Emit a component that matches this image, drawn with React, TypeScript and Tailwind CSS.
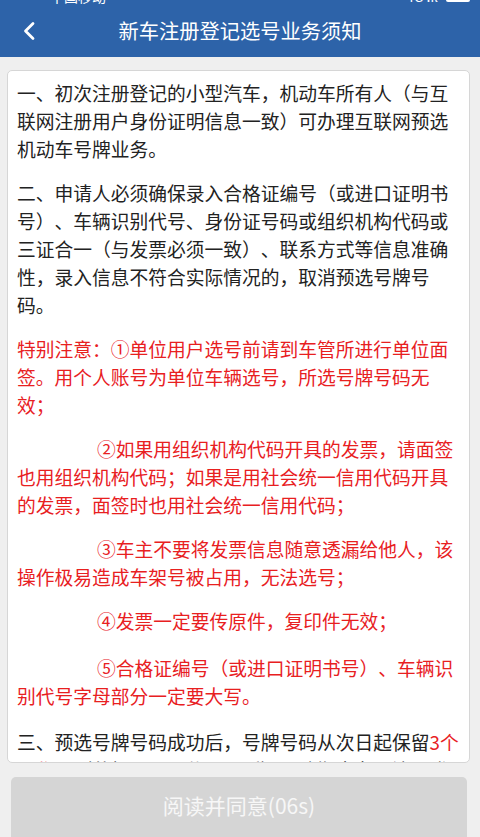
const cjk = "font-['Noto_Sans_CJK_SC','Noto_Sans',sans-serif]";

const Notice = () => {
  return (
    <div
      className={`mt-[13px] ml-[7px] mr-[10px] flex-1 min-h-0 overflow-hidden rounded-[5px] border border-[#d6d6d6] bg-white pl-[9px] pr-[8px] pt-[8px] text-[18.75px] leading-[28px] text-[#222] [text-spacing-trim:space-all] ${cjk}`}
    >
      <p className="mb-4">
        一、初次注册登记的小型汽车，机动车所有人（与互联网注册用户身份证明信息一致）可办理互联网预选机动车号牌业务。
      </p>
      <p className="mb-4">
        二、申请人必须确保录入合格证编号（或进口证明书号）、车辆识别代号、身份证号码或组织机构代码或三证合一（与发票必须一致）、联系方式等信息准确性，录入信息不符合实际情况的，取消预选号牌号码。
      </p>
      <div className="text-[#e8201f]">
        <p className="mb-4">
          特别注意：①单位用户选号前请到车管所进行单位面签。用个人账号为单位车辆选号，所选号牌号码无效；
        </p>
        <p className="mb-4 indent-[80px]">
          ②如果用组织机构代码开具的发票，请面签也用组织机构代码；如果是用社会统一信用代码开具的发票，面签时也用社会统一信用代码；
        </p>
        <p className="mb-4 indent-[80px]">
          ③车主不要将发票信息随意透漏给他人，该操作极易造成车架号被占用，无法选号；
        </p>
        <p className="mb-[19px] indent-[80px]">④发票一定要传原件，复印件无效；</p>
        <p className="mb-[18px] indent-[80px]">
          ⑤合格证编号（或进口证明书号）、车辆识别代号字母部分一定要大写。
        </p>
      </div>
      <p>
        三、预选号牌号码成功后，号牌号码从次日起保留
        <span className="text-[#e8201f]">3个工作日</span>
        （节假日、公休日顺延），逾期未办理注册登记的，预选号牌号码作废。
      </p>
    </div>
  );
};

export default function App() {
  return (
    <div className={`flex h-[837px] w-[480px] flex-col bg-[#efefef] ${cjk}`}>
      <div className="bg-[#2d63a9]">
        {/* status bar, mostly cropped off in the shot */}
        <div className="h-[5px] overflow-hidden">
          <div className="-mt-[11px] flex items-center justify-between pl-[50px] pr-[10px] text-[14px] leading-[14px] text-white">
            <span>中国移动</span>
            <div className="flex items-center gap-2">
              <span>4G .ıl</span>
              <span className="h-[12px] w-[24px] rounded-[2px] bg-white" />
            </div>
          </div>
        </div>
        <div className="grid h-[52px] grid-cols-[60px_1fr_60px] items-center">
          <div className="flex items-center pl-[22px]">
            <svg width="14" height="20" viewBox="0 0 14 20" fill="none">
              <polyline
                points="11,2.5 3.5,10 11,17.5"
                stroke="white"
                strokeWidth="2.8"
                strokeLinecap="round"
                strokeLinejoin="round"
              />
            </svg>
          </div>
          <h1 className="text-center text-[20.25px] font-normal text-white">
            新车注册登记选号业务须知
          </h1>
          <div />
        </div>
      </div>

      <Notice />

      <button className="mt-[14px] ml-[11px] mr-[13px] flex h-[60px] shrink-0 items-center justify-center rounded-t-[5px] bg-[#d5d5d5] pb-[2px] text-[21px] text-[#f7f7f7]">
        阅读并同意(06s)
      </button>
    </div>
  );
}
